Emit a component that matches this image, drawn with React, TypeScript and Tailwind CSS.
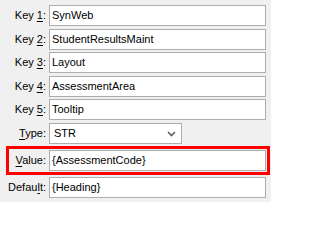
import type React from "react";

const font = { fontFamily: '"Liberation Sans", Arial, sans-serif' };

const Label: React.FC<{ pre: string; key_: string; post: string }> = ({ pre, key_, post }) => (
  <div className="w-[37px] shrink-0 flex justify-end whitespace-nowrap text-[11px] text-black">
    <span>
      {pre}
      <u className="underline-offset-[2px]">{key_}</u>
      {post}
    </span>
  </div>
);

const Field: React.FC<{ value: string }> = ({ value }) => (
  <div className="ml-[3px] mr-[1px] flex-1 h-[21px] flex items-center border border-[#adadad] bg-white px-[2px] text-[11px] text-black whitespace-nowrap overflow-hidden">
    {value}
  </div>
);

const App: React.FC = () => {
  return (
    <div style={font} className="w-[271px] h-[202px] bg-[#f0f0f0] pl-[6px] pr-[1px] pt-[5px] overflow-hidden">
      {/* Key rows */}
      <div className="flex items-center px-[3px]">
        <Label pre="Key " key_="1" post=":" />
        <Field value="SynWeb" />
      </div>
      <div className="flex items-center px-[3px] mt-[3px]">
        <Label pre="Key " key_="2" post=":" />
        <Field value="StudentResultsMaint" />
      </div>
      <div className="flex items-center px-[3px] mt-[2px]">
        <Label pre="Key " key_="3" post=":" />
        <Field value="Layout" />
      </div>
      <div className="flex items-center px-[3px] mt-[3px]">
        <Label pre="Key " key_="4" post=":" />
        <Field value="AssessmentArea" />
      </div>
      <div className="flex items-center px-[3px] mt-[2px]">
        <Label pre="Key " key_="5" post=":" />
        <Field value="Tooltip" />
      </div>

      {/* Type select */}
      <div className="flex items-center px-[3px] mt-[3px]">
        <Label pre="" key_="T" post="ype:" />
        <div className="ml-[3px] w-[133px] h-[21px] flex items-center justify-between border border-[#adadad] bg-white pl-[4px] pr-[5px] text-[11px] text-black">
          <span>STR</span>
          <svg width="9" height="6" viewBox="0 0 9 6">
            <path d="M1 1 L4.5 4.5 L8 1" fill="none" stroke="#5f5f5f" strokeWidth="1.6" />
          </svg>
        </div>
      </div>

      {/* Value (highlighted) */}
      <div className="flex items-center border-[3px] border-[#ff0000] py-[1px] mt-[2px]">
        <Label pre="" key_="V" post="alue:" />
        <Field value="{AssessmentCode}" />
      </div>

      {/* Default */}
      <div className="flex items-center px-[3px] mt-[2px]">
        <Label pre="Defau" key_="l" post="t:" />
        <Field value="{Heading}" />
      </div>
    </div>
  );
};

export default App;
